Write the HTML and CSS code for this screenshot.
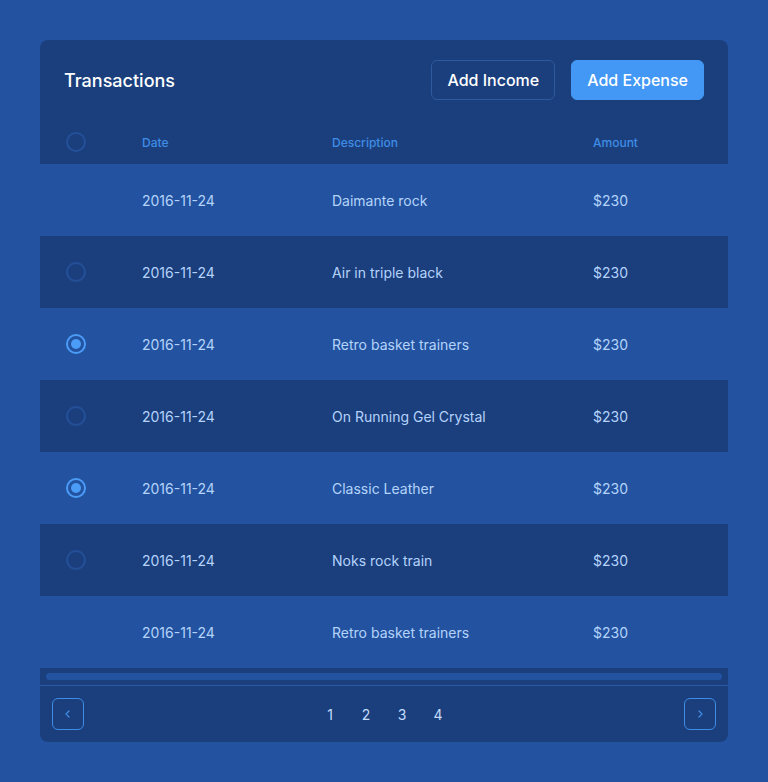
FILE: index.html
```html
<!DOCTYPE html>
<html>
<head>
<meta charset="utf-8">
<link rel="stylesheet" href="styles.css">
</head>
<body>
<div class="card">
  <div class="card-head">
    <h1 class="title">Transactions</h1>
    <div class="actions">
      <button class="btn btn-outline">Add Income</button>
      <button class="btn btn-primary">Add Expense</button>
    </div>
  </div>
  <div class="thead row">
    <div class="cell-check"><span class="radio"></span></div>
    <div>Date</div>
    <div>Description</div>
    <div>Amount</div>
  </div>
  <div class="row tr light">
    <div class="cell-check"></div>
    <div>2016-11-24</div>
    <div>Daimante rock</div>
    <div>$230</div>
  </div>
  <div class="row tr dark">
    <div class="cell-check"><span class="radio"></span></div>
    <div>2016-11-24</div>
    <div>Air in triple black</div>
    <div>$230</div>
  </div>
  <div class="row tr light">
    <div class="cell-check"><span class="radio checked"></span></div>
    <div>2016-11-24</div>
    <div>Retro basket trainers</div>
    <div>$230</div>
  </div>
  <div class="row tr dark">
    <div class="cell-check"><span class="radio"></span></div>
    <div>2016-11-24</div>
    <div>On Running Gel Crystal</div>
    <div>$230</div>
  </div>
  <div class="row tr light">
    <div class="cell-check"><span class="radio checked"></span></div>
    <div>2016-11-24</div>
    <div>Classic Leather</div>
    <div>$230</div>
  </div>
  <div class="row tr dark">
    <div class="cell-check"><span class="radio"></span></div>
    <div>2016-11-24</div>
    <div>Noks rock train</div>
    <div>$230</div>
  </div>
  <div class="row tr light">
    <div class="cell-check"></div>
    <div>2016-11-24</div>
    <div>Retro basket trainers</div>
    <div>$230</div>
  </div>
  <div class="scroll"><div class="thumb"></div></div>
  <div class="pager">
    <button class="pbtn" aria-label="Previous">
      <svg width="10" height="10" viewBox="0 0 10 10"><path d="M6 2 L3 5 L6 8" fill="none" stroke="#3f8de6" stroke-width="1.2" stroke-linecap="round" stroke-linejoin="round"/></svg>
    </button>
    <div class="pages">
      <span>1</span><span>2</span><span>3</span><span>4</span>
    </div>
    <button class="pbtn" aria-label="Next">
      <svg width="10" height="10" viewBox="0 0 10 10"><path d="M4 2 L7 5 L4 8" fill="none" stroke="#3f8de6" stroke-width="1.2" stroke-linecap="round" stroke-linejoin="round"/></svg>
    </button>
  </div>
</div>
</body>
</html>
```
FILE: styles.css
```css
* { box-sizing: border-box; }
html, body { margin: 0; padding: 0; }
body {
  background: #2353a0;
  font-family: Inter, "Noto Sans", sans-serif;
  padding: 40px;
  min-height: 782px;
}
.card {
  background: #1b3f7d;
  border-radius: 8px;
  overflow: hidden;
  width: 688px;
}
.card-head {
  display: flex;
  align-items: center;
  justify-content: space-between;
  padding: 20px 24px 20px 24px;
}
.title {
  margin: 0;
  font-size: 18px;
  font-weight: 500;
  color: #ffffff;
}
.actions { display: flex; gap: 16px; }
.btn {
  font-family: inherit;
  font-size: 16px;
  font-weight: 500;
  height: 40px;
  border-radius: 6px;
  padding: 0 15px;
  color: #ffffff;
  white-space: nowrap;
  cursor: pointer;
}
.btn-outline {
  background: transparent;
  border: 1px solid #2f5a9e;
}
.btn-primary {
  background: #4298f4;
  border: 1px solid #4298f4;
}
.row {
  display: grid;
  grid-template-columns: 102px 190px 261px 1fr;
  align-items: center;
}
.cell-check { padding-left: 26px; display: flex; align-items: center; }
.thead {
  height: 44px;
  font-size: 12px;
  font-weight: 500;
  color: #3f8de6;
}
.tr {
  height: 72px;
  font-size: 14px;
  color: #b4d3fb;
}
.tr.light { background: #2353a0; }
.tr.dark { background: #1b3f7d; }
.radio {
  width: 20px;
  height: 20px;
  border-radius: 50%;
  border: 2px solid #24509a;
  display: inline-flex;
  align-items: center;
  justify-content: center;
}
.radio.checked { border-color: #4a9cf7; }
.radio.checked::after {
  content: "";
  width: 10px;
  height: 10px;
  border-radius: 50%;
  background: #4a9cf7;
}
.scroll {
  height: 18px;
  padding: 5px 6px 5px 6px;
  border-bottom: 1px solid #2a5aa6;
}
.thumb {
  height: 7px;
  border-radius: 4px;
  background: #2353a0;
}
.pager {
  height: 56px;
  display: flex;
  align-items: center;
  justify-content: space-between;
  padding: 0 12px;
}
.pbtn {
  width: 32px;
  height: 32px;
  border: 1px solid #3f8de6;
  border-radius: 6px;
  background: transparent;
  display: flex;
  align-items: center;
  justify-content: center;
  padding: 0;
}
.pages { display: flex; }
.pages span {
  width: 36px;
  text-align: center;
  font-size: 14px;
  color: #c4dcfc;
}
```
